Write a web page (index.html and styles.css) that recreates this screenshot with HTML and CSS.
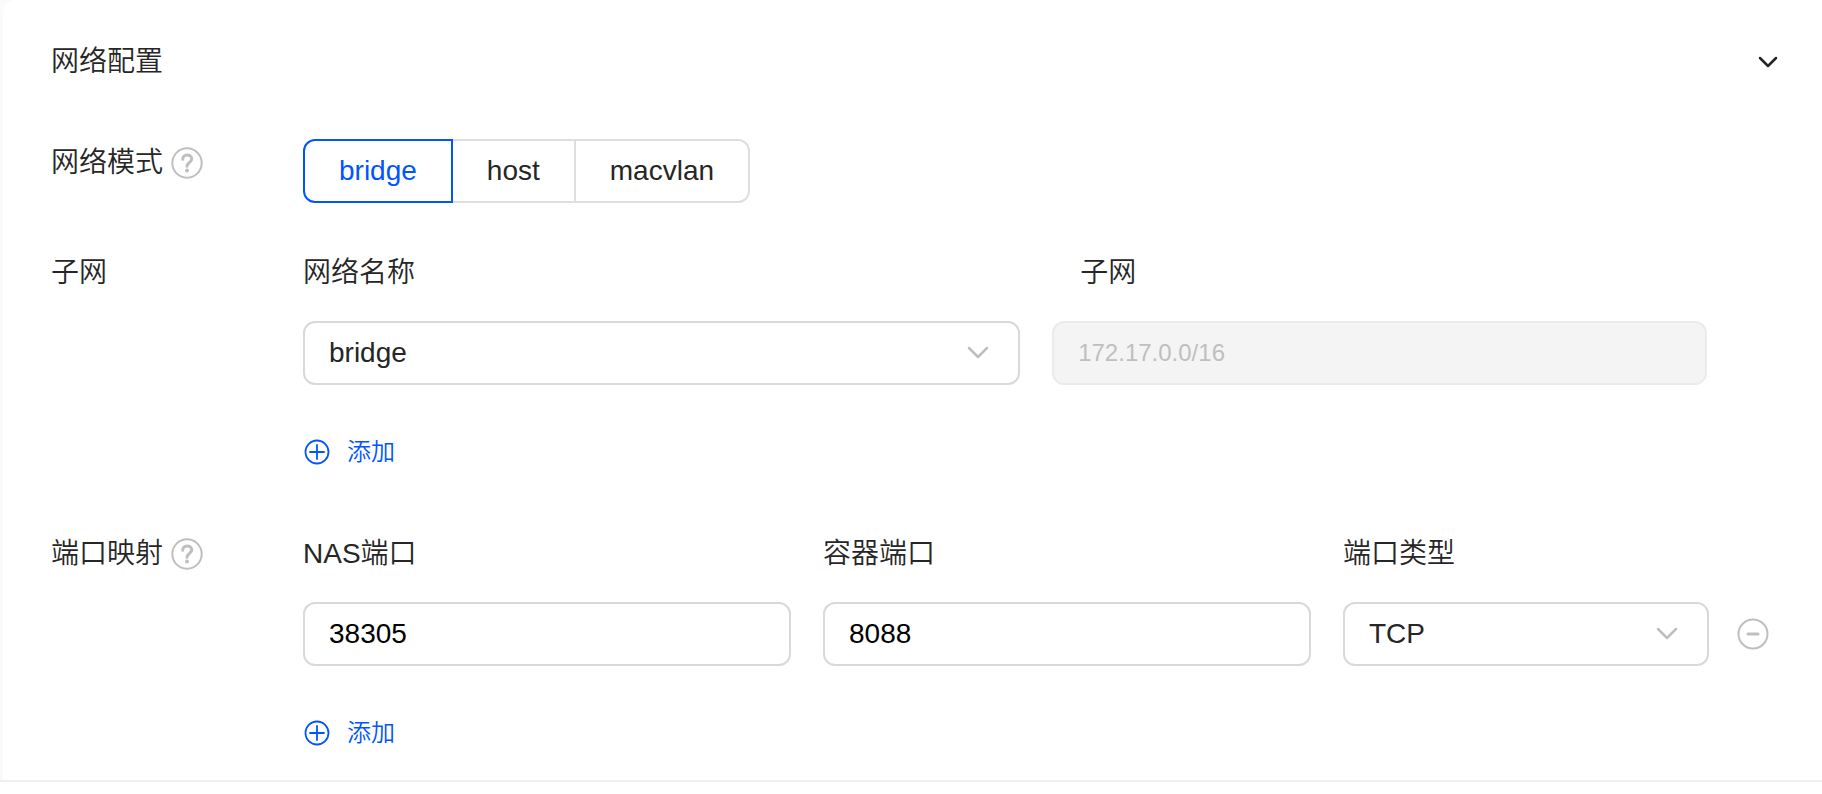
FILE: index.html
```html
<!DOCTYPE html>
<html lang="zh-CN">
<head>
<meta charset="utf-8">
<meta name="viewport" content="width=device-width, initial-scale=1">
<title>网络配置</title>
<link rel="stylesheet" href="styles.css">
</head>
<body>
<main class="page">
<div class="panel">
  <header class="panel-header">
    <h1 class="panel-title">网络配置</h1>
    <button class="icon-button" type="button" aria-label="收起">
      <svg class="icon-collapse" viewBox="0 0 20 12" aria-hidden="true"><path d="M2 2l8 8 8-8"/></svg>
    </button>
  </header>

  <form class="form">
    <section class="row">
      <div class="row-label row-label-compact" id="mode-label">网络模式
        <button class="icon-button" type="button" aria-label="网络模式说明">
          <svg class="icon-help" viewBox="0 0 32 32" aria-hidden="true"><circle cx="16" cy="16" r="14.700"/><path class="mark" d="M11.700 12.300c0-2.700 1.900-4.300 4.500-4.300s4.500 1.600 4.500 4c0 3.400-4.700 3.600-4.700 7.200"/><circle class="dot" cx="16" cy="23.500" r="2"/></svg>
        </button>
      </div>
      <div class="segmented" role="radiogroup" aria-labelledby="mode-label">
        <label class="segment"><input class="segment-input" type="radio" name="mode" value="bridge" checked><span>bridge</span></label>
        <label class="segment"><input class="segment-input" type="radio" name="mode" value="host"><span>host</span></label>
        <label class="segment"><input class="segment-input" type="radio" name="mode" value="macvlan"><span>macvlan</span></label>
      </div>
    </section>

    <section class="row">
      <div class="row-label">子网</div>
      <div class="row-body">
        <div class="subnet-fields">
          <div class="field">
            <label class="field-label" for="network">网络名称</label>
            <div class="select-wrap">
              <select class="control" id="network"><option>bridge</option></select>
              <svg class="icon-chevron" viewBox="0 0 22 14" aria-hidden="true"><path d="M2 2l9 9 9-9"/></svg>
            </div>
          </div>
          <div class="field">
            <label class="field-label inset" for="subnet">子网</label>
            <input class="control" id="subnet" type="text" value="172.17.0.0/16" disabled>
          </div>
        </div>
        <button class="add" type="button">
          <svg class="icon-add" viewBox="0 0 28 28" aria-hidden="true"><circle cx="14" cy="14" r="11.500"/><path d="M7 14h14M14 7v14"/></svg>
          添加
        </button>
      </div>
    </section>

    <section class="row row-ports">
      <div class="row-label">端口映射
        <button class="icon-button" type="button" aria-label="端口映射说明">
          <svg class="icon-help" viewBox="0 0 32 32" aria-hidden="true"><circle cx="16" cy="16" r="14.700"/><path class="mark" d="M11.700 12.300c0-2.700 1.900-4.300 4.500-4.300s4.500 1.600 4.500 4c0 3.400-4.700 3.600-4.700 7.200"/><circle class="dot" cx="16" cy="23.500" r="2"/></svg>
        </button>
      </div>
      <div class="row-body">
        <div class="port-fields">
          <div class="field">
            <label class="field-label" for="nas-port">NAS端口</label>
            <input class="control" id="nas-port" type="text" inputmode="numeric" value="38305">
          </div>
          <div class="field">
            <label class="field-label" for="container-port">容器端口</label>
            <input class="control" id="container-port" type="text" inputmode="numeric" value="8088">
          </div>
          <div class="field">
            <label class="field-label" for="port-type">端口类型</label>
            <div class="select-wrap">
              <select class="control" id="port-type"><option>TCP</option><option>UDP</option></select>
              <svg class="icon-chevron" viewBox="0 0 22 14" aria-hidden="true"><path d="M2 2l9 9 9-9"/></svg>
            </div>
          </div>
          <button class="icon-button remove" type="button" aria-label="删除">
            <svg class="icon-remove" viewBox="0 0 32 32" aria-hidden="true"><circle cx="16" cy="16" r="14.500"/><path d="M11 16h10"/></svg>
          </button>
        </div>
        <button class="add" type="button">
          <svg class="icon-add" viewBox="0 0 28 28" aria-hidden="true"><circle cx="14" cy="14" r="11.500"/><path d="M7 14h14M14 7v14"/></svg>
          添加
        </button>
      </div>
    </section>
  </form>
</div>
</main>
</body>
</html>
```
FILE: styles.css
```css
:root {
  --text: #262626;
  --blue: #0055ff;
  --border: #d9d9d9;
  --muted: #bfbfbf;
}

* {
  box-sizing: border-box;
}

body {
  margin: 0;
  background: #fff;
  color: var(--text);
  font: 350 28px/40px "Liberation Sans", "Noto Sans CJK SC", sans-serif;
}

button,
input,
select {
  font: inherit;
  color: inherit;
}

svg {
  display: block;
  fill: none;
  stroke-linecap: round;
  stroke-linejoin: round;
}

.page {
  padding-left: 3px;
  border-bottom: 2px solid #efeff0;
  background: #fafafa;
}

.panel {
  padding: 42px 44px 28px 48px;
  border-top-left-radius: 12px;
  background: #fff;
}

.panel-header {
  display: flex;
  align-items: center;
  justify-content: space-between;
  margin-bottom: 57px;
}

.panel-title {
  margin: 0;
  font-size: 28px;
  font-weight: inherit;
}

.icon-button {
  display: block;
  padding: 0;
  border: 0;
  background: none;
  cursor: pointer;
}

.form {
  display: flex;
  flex-direction: column;
  gap: 44px;
}

.row {
  display: grid;
  grid-template-columns: 252px 1fr;
  align-items: start;
}

.row-ports {
  margin-top: 13px;
}

.row-label {
  display: flex;
  align-items: center;
  gap: 8px;
  height: 52px;
}

.row-label-compact {
  height: 48px;
}

.row-body {
  display: flex;
  flex-direction: column;
  align-items: stretch;
  gap: 48px;
}

.segmented {
  display: flex;
}

.segment {
  display: flex;
  align-items: center;
  height: 64px;
  padding: 0 34px;
  border: 2px solid #dcdee2;
  border-left-width: 0;
  cursor: pointer;
}

.segment:first-child {
  border-left-width: 2px;
  border-radius: 12px 0 0 12px;
}

.segment:last-child {
  border-radius: 0 12px 12px 0;
}

.segment:has(:checked) {
  border-color: var(--blue);
  color: var(--blue);
}

.segment-input {
  position: absolute;
  opacity: 0;
  pointer-events: none;
}

.subnet-fields {
  display: grid;
  grid-template-columns: 23fr 21fr;
  gap: 32px;
  padding-right: 71px;
}

.port-fields {
  display: grid;
  grid-template-columns: 4fr 4fr 3fr auto;
  column-gap: 32px;
  padding-right: 9px;
}

.field {
  display: flex;
  flex-direction: column;
  gap: 22px;
  min-width: 0;
}

.field-label {
  line-height: 52px;
}

.inset {
  padding-left: 28px;
}

.control {
  display: block;
  appearance: none;
  width: 100%;
  height: 64px;
  padding: 0 24px;
  border: 2px solid var(--border);
  border-radius: 12px;
  background: #fff;
}

input.control {
  color: #000;
}

.control:disabled {
  border-color: #ebebeb;
  background: #f4f4f4;
  color: var(--muted);
  font-size: 24px;
  opacity: 1;
}

.select-wrap {
  position: relative;
}

.icon-chevron {
  position: absolute;
  top: 25px;
  right: 31px;
  width: 22px;
  height: 14px;
  stroke: var(--muted);
  stroke-width: 2.5;
  pointer-events: none;
}

.icon-collapse {
  width: 20px;
  height: 12px;
  stroke: var(--text);
  stroke-width: 2.5;
}

.icon-help {
  width: 32px;
  height: 32px;
  stroke: var(--muted);
  stroke-width: 2;
}

.icon-help .mark {
  stroke-width: 3;
}

.icon-help .dot {
  fill: var(--muted);
  stroke: none;
}

.icon-remove {
  width: 32px;
  height: 32px;
  stroke: var(--muted);
  stroke-width: 2;
}

.icon-remove path {
  stroke-width: 3;
}

.remove {
  align-self: end;
  margin: 0 0 16px -4px;
}

.add {
  display: flex;
  align-items: center;
  align-self: flex-start;
  gap: 16px;
  height: 38px;
  padding: 0;
  border: 0;
  background: none;
  color: var(--blue);
  font-size: 24px;
  cursor: pointer;
}

.icon-add {
  width: 28px;
  height: 28px;
  stroke: currentColor;
  stroke-width: 1.8;
}
```
